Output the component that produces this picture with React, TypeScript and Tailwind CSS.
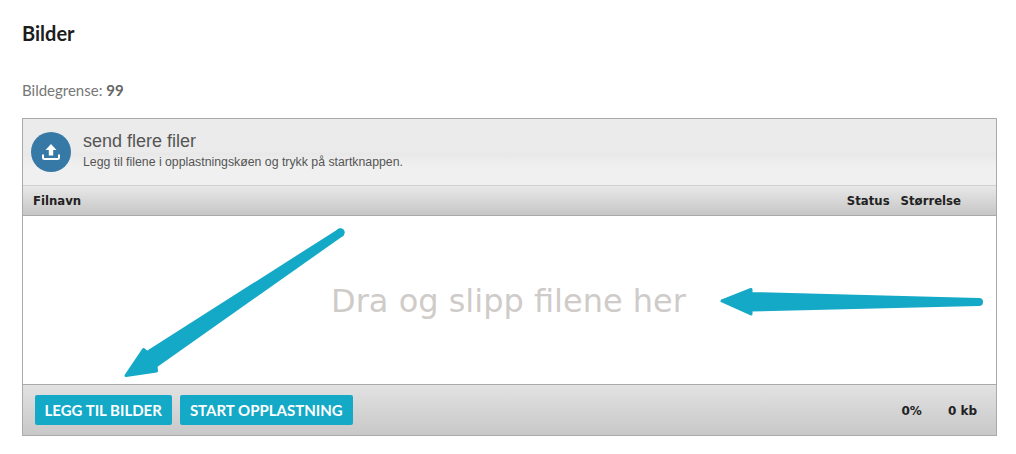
const lato = "font-['Lato',sans-serif]"
const dejavu = "font-['DejaVu_Sans',sans-serif]"
const arial = "font-['Liberation_Sans',sans-serif]"

function Arrows() {
  return (
    <svg className="absolute inset-0 w-full h-full" viewBox="23 216 972 168">
      <circle cx="340" cy="232.500" r="4.200" fill="#14a9c6" />
      <path
        d="M339 230 L342 234.500 L155.500 366 L156 371 L125.500 375.500 L143 349.500 L146.500 352.500 Z"
        fill="#14a9c6"
        stroke="#14a9c6"
        strokeWidth="3"
        strokeLinejoin="round"
      />
      <circle cx="978.500" cy="302" r="4" fill="#14a9c6" />
      <path
        d="M978 299.500 L978 304.500 L750.500 310 L750.500 314 L721.500 301 L750.500 289.500 L750.500 293.500 Z"
        fill="#14a9c6"
        stroke="#14a9c6"
        strokeWidth="3"
        strokeLinejoin="round"
      />
    </svg>
  )
}

function UploadIcon() {
  return (
    <svg className="w-[24px] h-[24px]" viewBox="0 0 24 24">
      <path d="M12 4 L17.500 10 L14.200 10 L14.200 15.500 L9.800 15.500 L9.800 10 L6.500 10 Z" fill="#fff" />
      <path d="M4 14.500 V17.500 Q4 19 5.500 19 H18.500 Q20 19 20 17.500 V14.500" fill="none" stroke="#fff" strokeWidth="2" />
    </svg>
  )
}

export default function App() {
  return (
    <div className={`w-[1016px] h-[454px] bg-white px-[22px] pt-[21px] overflow-hidden ${lato}`}>
      <h2 className="text-[20px] leading-[24px] font-bold text-[#1d1d1d]">Bilder</h2>
      <p className="mt-[35px] text-[15px] leading-[20px] text-[#777]">
        Bildegrense: <strong className="font-bold text-[#666]">99</strong>
      </p>

      <div className="mt-[18px] w-[975px] border border-[#aaa]">
        <div className="h-[67px] flex items-center gap-[12px] pl-[8px] border-b border-[#d0d0d0] bg-[linear-gradient(#ebebeb_0,#ebebeb_33px,#e8e8e8_34px,#f0f0f0_48px,#f0f0f0_100%)]">
          <div className="w-[40px] h-[40px] rounded-full bg-[#3779a6] flex items-center justify-center">
            <UploadIcon />
          </div>
          <div className={`${arial} text-[#555] -translate-y-[2px]`}>
            <div className="text-[18px] leading-[20px]">send flere filer</div>
            <div className="text-[12.3px] leading-[14px] mt-[4px]">
              Legg til filene i opplastningskøen og trykk på startknappen.
            </div>
          </div>
        </div>

        <div className={`h-[30px] pt-[2px] flex items-center justify-between pl-[10px] pr-[35px] border-b border-[#aaa] bg-[linear-gradient(#e8e8e8,#c6c6c6)] ${dejavu} text-[11.7px] font-bold text-[#222]`}>
          <span>Filnavn</span>
          <div className="flex gap-[11px]">
            <span>Status</span>
            <span>Størrelse</span>
          </div>
        </div>

        <div className="relative h-[169px] pt-[2px] border-b border-[#aaa] flex items-center justify-center bg-white">
          <span className={`${dejavu} text-[32px] leading-none text-[#cfcbc9] -translate-x-[1px]`}>
            Dra og slipp filene her
          </span>
          <Arrows />
        </div>

        <div className="h-[50px] flex items-center justify-between pl-[12px] pr-[19px] bg-[linear-gradient(#e2e2e2,#c8c8c8)]">
          <div className="flex gap-[8px]">
            <button className="h-[30px] pl-[9.5px] pr-[10.5px] rounded-[2px] bg-[#14a9c6] text-white text-[15px] font-bold">
              LEGG TIL BILDER
            </button>
            <button className="h-[30px] pl-[9.5px] pr-[10px] rounded-[2px] bg-[#14a9c6] text-white text-[15px] font-bold">
              START OPPLASTNING
            </button>
          </div>
          <div className={`flex gap-[26px] pt-[2px] ${dejavu} text-[12px] font-bold text-[#222]`}>
            <span>0%</span>
            <span>0 kb</span>
          </div>
        </div>
      </div>
    </div>
  )
}
